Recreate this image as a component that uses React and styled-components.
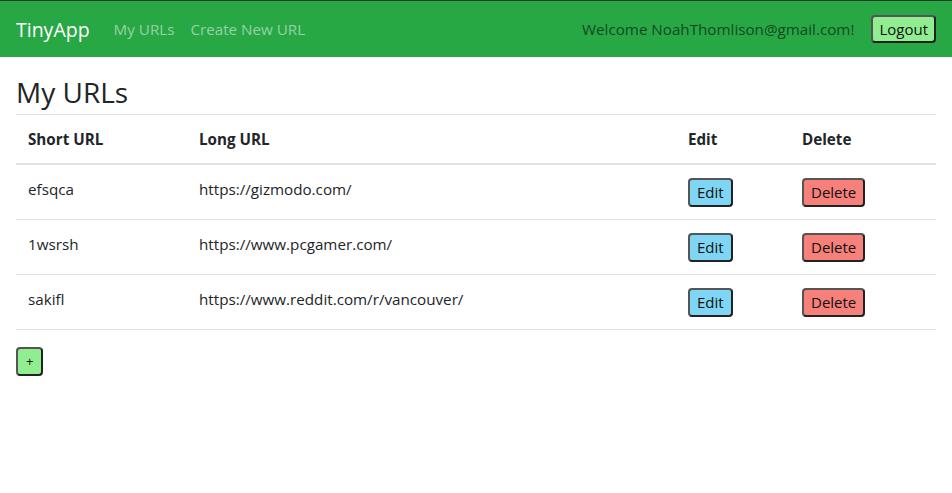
import React from "react";
import styled, { createGlobalStyle } from "styled-components";

const GlobalStyle = createGlobalStyle`
  body {
    margin: 0;
    font-family: "Open Sans", "Noto Sans", sans-serif;
    font-size: 15px;
    color: #212529;
    background: #fff;
  }
`;

const Navbar = styled.nav`
  display: flex;
  align-items: center;
  justify-content: space-between;
  height: 56px;
  border-top: 1px solid #1d3a22;
  background: #28a745;
  padding: 0 16px;
`;

const NavLeft = styled.div`
  display: flex;
  align-items: center;
`;

const Brand = styled.span`
  color: #fff;
  font-size: 19.5px;
  margin-right: 24px;
`;

const NavLink = styled.span`
  color: rgba(255, 255, 255, 0.5);
  font-size: 15.2px;
  margin-right: 16px;
`;

const NavRight = styled.div`
  display: flex;
  align-items: center;
`;

const Welcome = styled.span`
  color: rgba(0, 0, 0, 0.6);
  font-size: 15.2px;
  margin-right: 17px;
`;

const Button = styled.button`
  font-family: inherit;
  font-size: ${p => p.$size || 15}px;
  color: #111;
  background: ${p => p.$bg};
  border: 2px solid #333;
  border-color: #555 #222 #222 #555;
  border-radius: 4px;
  height: ${p => p.$h || 29}px;
  padding: 0 ${p => p.$px || 6}px;
  line-height: 1;
  vertical-align: top;
  cursor: pointer;
`;

const Main = styled.main`
  padding: 0 16px;
`;

const Title = styled.h2`
  font-weight: 400;
  font-size: 28px;
  margin: 19px 0 6px;
  line-height: 32px;
`;

const Table = styled.table`
  width: 100%;
  border-collapse: collapse;
  table-layout: fixed;
`;

const Th = styled.th`
  text-align: left;
  font-weight: 700;
  font-size: 15.2px;
  padding: 12px;
  line-height: 24px;
  border-top: 1px solid #dee2e6;
  border-bottom: 2px solid #dee2e6;
  width: ${p => (p.$w ? `${p.$w}px` : "auto")};
`;

const Td = styled.td`
  vertical-align: top;
  font-size: 15.2px;
  padding: ${p => (p.$btn ? "13px 12px 12px" : "12px 12px 13px")};
  line-height: 24px;
  border-bottom: 1px solid #dee2e6;
  height: 29px;
`;

const AddWrap = styled.div`
  margin-top: 17px;
`;

const urls = [
  { short: "efsqca", long: "https://gizmodo.com/" },
  { short: "1wsrsh", long: "https://www.pcgamer.com/" },
  { short: "sakifl", long: "https://www.reddit.com/r/vancouver/" },
];

export default function App() {
  return (
    <>
      <GlobalStyle />
      <Navbar>
        <NavLeft>
          <Brand>TinyApp</Brand>
          <NavLink>My URLs</NavLink>
          <NavLink>Create New URL</NavLink>
        </NavLeft>
        <NavRight>
          <Welcome>Welcome NoahThomlison@gmail.com!</Welcome>
          <Button $bg="#90ee90" $h={28}>Logout</Button>
        </NavRight>
      </Navbar>
      <Main>
        <Title>My URLs</Title>
        <Table>
          <thead>
            <tr>
              <Th $w={147}>Short URL</Th>
              <Th $w={465}>Long URL</Th>
              <Th $w={90}>Edit</Th>
              <Th>Delete</Th>
            </tr>
          </thead>
          <tbody>
            {urls.map(u => (
              <tr key={u.short}>
                <Td>{u.short}</Td>
                <Td>{u.long}</Td>
                <Td $btn>
                  <Button $bg="#7fd6f4" $px={7}>Edit</Button>
                </Td>
                <Td $btn>
                  <Button $bg="#f7807a" $px={7}>Delete</Button>
                </Td>
              </tr>
            ))}
          </tbody>
        </Table>
        <AddWrap>
          <Button $bg="#90ee90" $size={13} $px={8}>+</Button>
        </AddWrap>
      </Main>
    </>
  );
}
